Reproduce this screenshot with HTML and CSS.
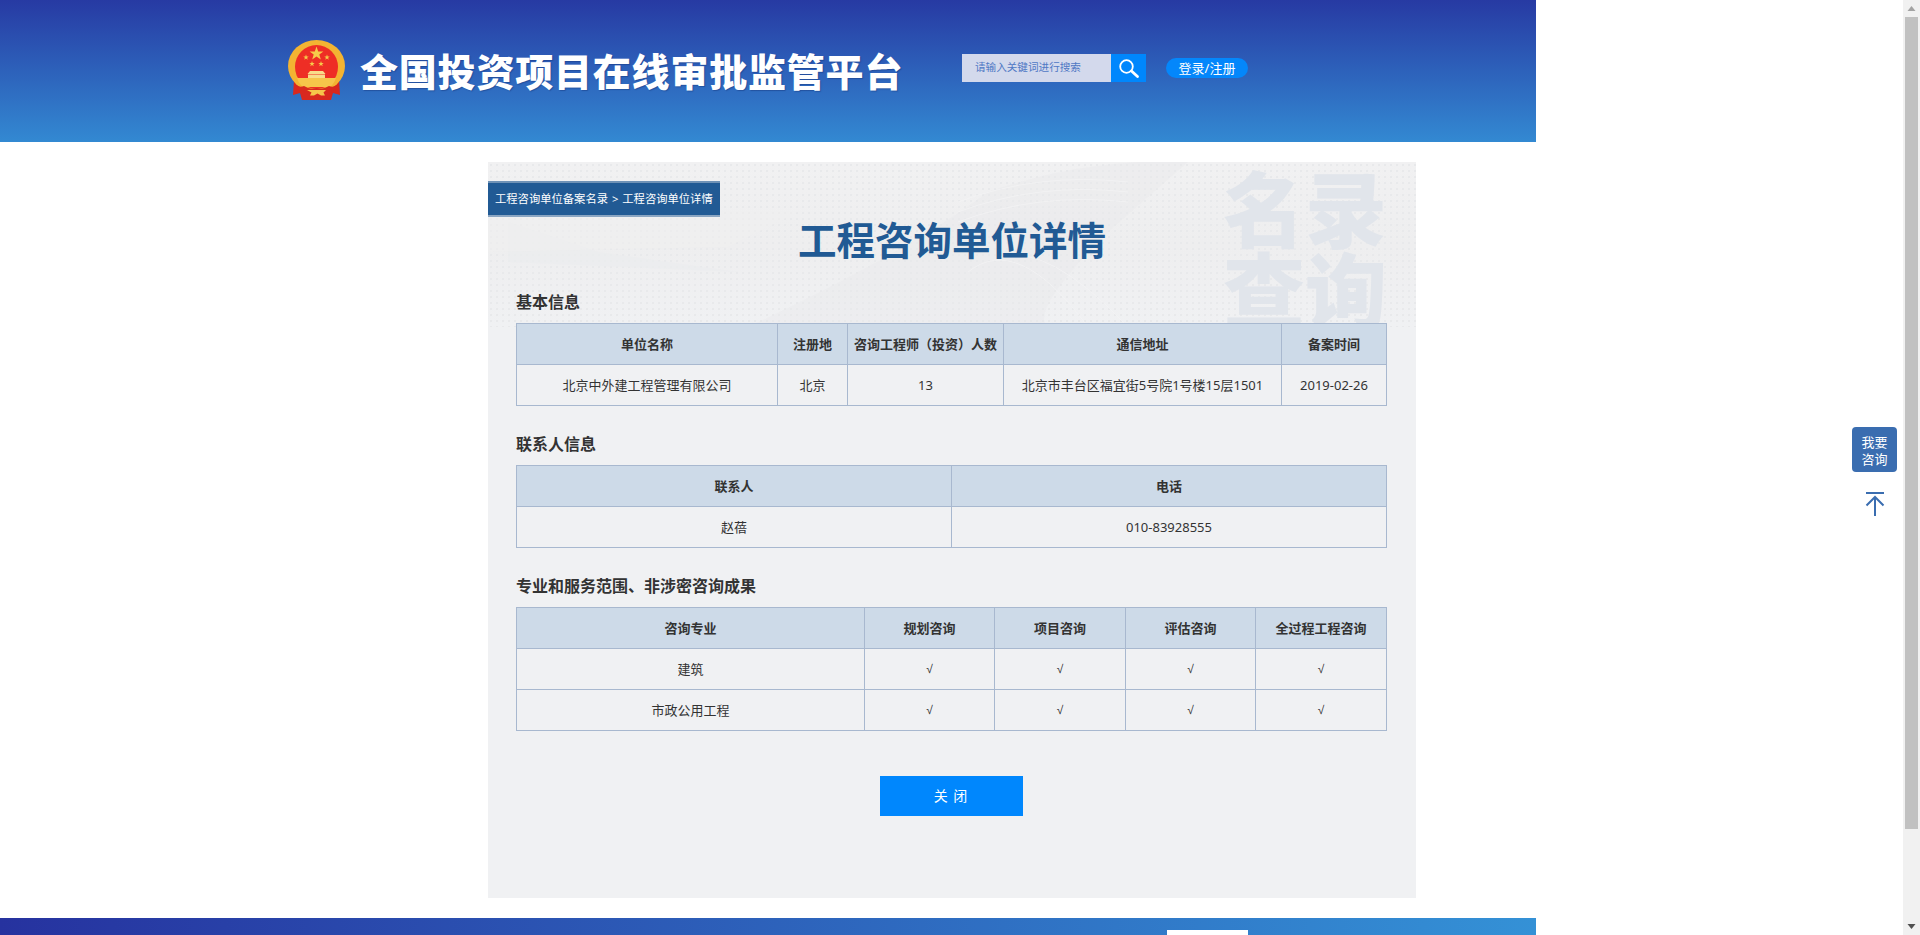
FILE: index.html
```html
<!DOCTYPE html>
<html lang="zh-CN">
<head>
<meta charset="utf-8">
<title>工程咨询单位详情</title>
<link rel="stylesheet" href="styles.css">
</head>
<body>
<header class="site-header">
  <svg class="emblem" viewBox="0 0 57 60" aria-hidden="true">
    <path d="M6 40 L5 55 L12 53 L14 60 L43 60 L45 53 L52 55 L51 40 Z" fill="#d8281e"/>
    <ellipse cx="28.5" cy="26" rx="28.5" ry="26" fill="#f3b432"/>
    <ellipse cx="28.5" cy="27" rx="21.5" ry="22" fill="#ee2e25"/>
    <path d="M28.5 6.500 l1.700 4.900 5.200.1-4.100 3.100 1.500 5-4.300-3-4.300 3 1.500-5-4.100-3.100 5.200-.1z" fill="#f6cb4a"/>
    <path d="M18 14.500 l.7 1.900 2 .1-1.600 1.200.6 2-1.700-1.200-1.700 1.200.6-2-1.600-1.200 2-.1z" fill="#f6cb4a"/>
    <path d="M39 14.500 l.7 1.900 2 .1-1.600 1.200.6 2-1.700-1.200-1.700 1.200.6-2-1.600-1.200 2-.1z" fill="#f6cb4a"/>
    <path d="M24 21 l.7 1.900 2 .1-1.600 1.200.6 2-1.700-1.200-1.700 1.200.6-2-1.600-1.200 2-.1z" fill="#f6cb4a"/>
    <path d="M33 21 l.7 1.900 2 .1-1.600 1.200.6 2-1.700-1.200-1.700 1.200.6-2-1.600-1.200 2-.1z" fill="#f6cb4a"/>
    <path d="M22 31 h13 l2.500 3 h-18 z M20 34.500 h17 v3.500 h-17 z" fill="#f8dc8a"/>
    <path d="M9 38 h39 q-2 6-6 9 h-27 q-4-3-6-9 z" fill="#f6c54a"/>
    <path d="M6 44 q5 4 10 2 q6 4 12.500 2 q6 2 12.500-2 q5 2 10-2 l-1 5 q-6 2-9 1 q-6 3-12.500 1.500 q-6 1.500-12.500-1.500 q-3 1-9-1 z" fill="#d8281e"/>
    <path d="M19 50 h19 l-2.500 2.500 l1.500 3 h-4 l-3.500-2 l-3.500 2 h-4 l1.500-3 z" fill="#f6c54a"/>
  </svg>
  <h1 class="site-title">全国投资项目在线审批监管平台</h1>
  <form class="search">
    <span class="search-input">请输入关键词进行搜索</span>
    <span class="search-btn">
      <svg viewBox="0 0 35 28" aria-hidden="true">
        <circle cx="15.500" cy="12.500" r="6.300" fill="none" stroke="#fff" stroke-width="1.800"/>
        <path d="M20.500 17 L26.500 22.500" stroke="#fff" stroke-width="2.800" stroke-linecap="round"/>
      </svg>
    </span>
  </form>
  <a class="login-pill">登录/注册</a>
</header>

<main class="panel">
  <div class="panel-art" aria-hidden="true">
    <svg class="swoosh" viewBox="0 0 928 165" preserveAspectRatio="none">
      <path d="M20 60 L110 90 L250 110 L20 100 Z" fill="#ebecee" opacity=".7"/>
      <path d="M0 50 L310 50 L240 85 L0 90 Z" fill="#efeff0" opacity=".5"/>
      <path d="M260 165 Q420 90 500 30 Q600 -5 700 0 L620 70 Q540 150 560 165 Z" fill="#e8e9eb" opacity=".4"/>
      <g fill="none" stroke="#f5f5f6" stroke-width="1" opacity=".7">
        <path d="M470 40 Q550 10 640 20"/><path d="M470 50 Q550 20 640 30"/><path d="M470 60 Q550 30 640 40"/>
        <path d="M480 110 Q530 70 600 165"/><path d="M510 95 Q560 80 640 165"/>
      </g>
    </svg>
    <div class="watermark">名录<br>查询</div>
  </div>

  <nav class="crumb">工程咨询单位备案名录 &gt; 工程咨询单位详情</nav>
  <h2 class="page-title">工程咨询单位详情</h2>

  <section class="block block-first">
    <h3 class="block-title">基本信息</h3>
    <table class="grid">
      <colgroup><col class="c261"><col class="c70"><col class="c156"><col class="c278"><col class="c105"></colgroup>
      <tr><th>单位名称</th><th>注册地</th><th>咨询工程师（投资）人数</th><th>通信地址</th><th>备案时间</th></tr>
      <tr><td>北京中外建工程管理有限公司</td><td>北京</td><td>13</td><td>北京市丰台区福宜街5号院1号楼15层1501</td><td>2019-02-26</td></tr>
    </table>
  </section>

  <section class="block">
    <h3 class="block-title">联系人信息</h3>
    <table class="grid">
      <colgroup><col class="c435"><col class="c435"></colgroup>
      <tr><th>联系人</th><th>电话</th></tr>
      <tr><td>赵蓓</td><td>010-83928555</td></tr>
    </table>
  </section>

  <section class="block">
    <h3 class="block-title">专业和服务范围、非涉密咨询成果</h3>
    <table class="grid">
      <colgroup><col class="c348"><col class="c130"><col class="c131"><col class="c130"><col class="c131"></colgroup>
      <tr><th>咨询专业</th><th>规划咨询</th><th>项目咨询</th><th>评估咨询</th><th>全过程工程咨询</th></tr>
      <tr><td>建筑</td><td class="tick">√</td><td class="tick">√</td><td class="tick">√</td><td class="tick">√</td></tr>
      <tr><td>市政公用工程</td><td class="tick">√</td><td class="tick">√</td><td class="tick">√</td><td class="tick">√</td></tr>
    </table>
  </section>

  <div class="actions"><button class="close-btn" type="button">关 闭</button></div>
</main>

<footer class="site-footer"><div class="footer-tab"></div></footer>

<aside class="float-tools">
  <a class="ask-btn">我要<br>咨询</a>
  <svg class="to-top" viewBox="0 0 20 26" aria-hidden="true">
    <path d="M1 2 H19 M10 25 V6 M1.500 14.500 L10 6 L18.500 14.500" fill="none" stroke="#3a6db0" stroke-width="2"/>
  </svg>
</aside>

<div class="scrollbar" aria-hidden="true">
  <svg class="scroll-arrow" viewBox="0 0 17 17"><path d="M4.500 11 L8.500 6 L12.500 11 Z" fill="#a3a3a3"/></svg>
  <div class="scroll-thumb"></div>
  <svg class="scroll-arrow scroll-arrow-down" viewBox="0 0 17 17"><path d="M4.500 6 L12.500 6 L8.500 11 Z" fill="#505050"/></svg>
</div>
</body>
</html>
```

FILE: styles.css
```css
* { box-sizing: border-box; }
html, body { margin: 0; padding: 0; height: 935px; overflow: hidden; background: #fff; }
body { font-family: "Noto Sans", "Noto Sans CJK SC", sans-serif; color: #333; font-size: 13px; }

.site-header {
  width: 1536px; height: 142px;
  background: linear-gradient(180deg, #273aa3 0%, #3389d2 100%);
  display: flex; align-items: flex-start;
  padding-left: 288px;
}
.emblem { width: 57px; height: 60px; margin-top: 40px; flex: none; }
.site-title {
  margin: 44px 0 0 15px; width: 575px;
  font-family: "Noto Sans CJK SC", sans-serif;
  font-size: 38px; line-height: 52px; font-weight: 900; letter-spacing: .8px;
  color: #fff; white-space: nowrap;
  text-shadow: 1px 1px 1px rgba(20, 50, 120, .45);
}
.search { display: flex; margin: 54px 0 0 27px; width: 184px; height: 28px; flex: none; }
.search-input {
  width: 149px; height: 28px; padding-left: 13px;
  background: #d3d9ec; color: #4f78c4;
  font-size: 10.600px; line-height: 27px; white-space: nowrap;
}
.search-btn { width: 35px; height: 28px; background: #0087fd; display: block; }
.search-btn svg { display: block; width: 35px; height: 28px; }
.login-pill {
  margin: 58px 0 0 20px; width: 82px; height: 20px; flex: none;
  border-radius: 10px; background: #0487fb; color: #fff;
  font-size: 13px; line-height: 20px; text-align: center; white-space: nowrap;
}

.panel {
  position: relative; overflow: hidden;
  width: 928px; height: 736px; margin: 20px 0 0 488px;
  background: #f0f1f3;
}
.panel-art {
  position: absolute; left: 0; top: 0; width: 100%; height: 165px;
  background-color: #f1f2f3;
  background-image:
    radial-gradient(circle, #e8e9eb .8px, transparent 1.100px),
    linear-gradient(180deg, #f1f1f2 0%, #eeeeef 50%, #f0f1f3 100%);
  background-size: 6px 6px, 100% 100%;
}
.swoosh { position: absolute; inset: 0; width: 100%; height: 100%; }
.watermark {
  position: absolute; left: 735px; top: 3px; width: 170px;
  font-family: "Noto Sans CJK SC", sans-serif;
  font-size: 82px; line-height: 81px; font-weight: 900;
  color: #e1e5eb; white-space: nowrap;
}
.crumb {
  position: relative; width: 232px; height: 36px; margin-top: 19px;
  background: #215a94;
  border-top: 2px solid #6f92b6; border-bottom: 2px solid #8aa5c2;
  color: #fff; font-size: 11.300px; line-height: 31px; padding-left: 7px; white-space: nowrap; word-spacing: 1px;
}
.page-title {
  position: relative; margin: -2px 0 0 310px; width: 312px; height: 46px;
  font-family: "Noto Sans CJK SC", sans-serif;
  font-size: 38.500px; line-height: 46px; font-weight: 700; color: #215a94; white-space: nowrap;
}
.block { position: relative; margin: 0 28px; }
.block-first { margin-top: 28px; }
.block + .block { margin-top: 25px; }
.block-title {
  margin: 0; height: 34px;
  font-size: 16px; line-height: 26px; font-weight: 700; color: #333;
}
.grid { width: 870px; border-collapse: collapse; table-layout: fixed; }
.grid tr { height: 41px; }
.grid th, .grid td {
  border: 1px solid #a8b8cf; padding: 0; text-align: center;
  font-size: 13px; line-height: 18px; white-space: nowrap; color: #333;
}
.grid th { background: #cddae8; font-weight: 700; }
.grid td { font-weight: 400; }
.grid .tick { font-family: "Liberation Sans", sans-serif; font-size: 12px; }
.c70 { width: 70px; } .c105 { width: 105px; } .c130 { width: 130px; } .c131 { width: 131px; }
.c156 { width: 156px; } .c261 { width: 261px; } .c278 { width: 278px; }
.c348 { width: 348px; } .c435 { width: 435px; }

.actions { position: relative; display: flex; justify-content: center; margin-top: 45px; padding-right: 2px; }
.close-btn {
  width: 143px; height: 40px; border: 0; padding: 0;
  background: #0087fd; color: #fff;
  font-family: inherit; font-size: 14px; line-height: 40px; letter-spacing: 1px;
}

.site-footer {
  width: 1536px; height: 120px; margin-top: 20px; padding: 12px 0 0 1167px;
  background: linear-gradient(90deg, #26329f 0%, #3491d6 100%);
}
.footer-tab { width: 81px; height: 20px; background: #fff; }

.float-tools { position: fixed; left: 1852px; top: 427px; width: 45px; display: flex; flex-direction: column; align-items: center; }
.ask-btn {
  display: block; width: 45px; height: 45px; padding-top: 7px;
  border-radius: 4px; background: #3a6db0; color: #fff;
  font-size: 13px; line-height: 17px; text-align: center;
}
.to-top { display: block; width: 20px; height: 26px; margin-top: 19px; }

.scrollbar {
  position: fixed; right: 0; top: 0; width: 17px; height: 935px;
  background: #f1f1f1; display: flex; flex-direction: column;
}
.scroll-arrow { display: block; width: 17px; height: 17px; flex: none; }
.scroll-thumb { width: 13px; height: 812px; margin: 0 2px; background: #c1c1c1; flex: none; }
.scroll-arrow-down { margin-top: auto; }
```
